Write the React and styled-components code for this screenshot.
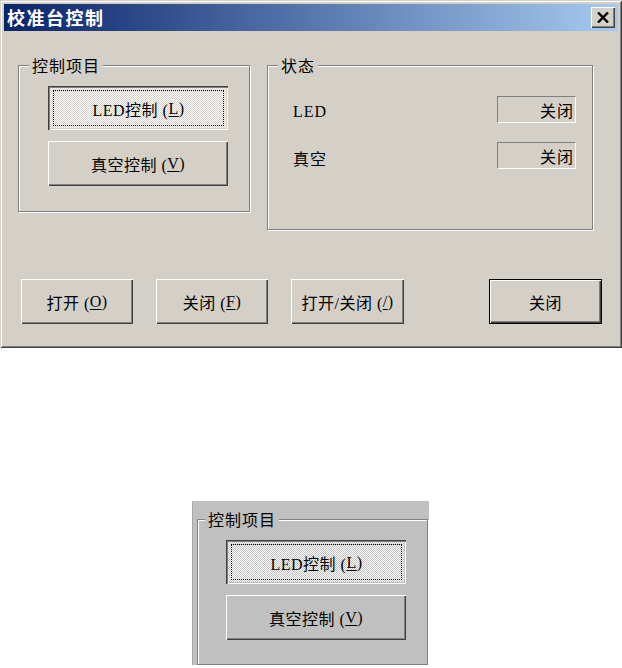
import React from "react";
import styled, { createGlobalStyle, css } from "styled-components";

const Global = createGlobalStyle`
  html, body { margin: 0; padding: 0; background: #fff; }
  body { font-family: "Liberation Serif", "Noto Sans CJK SC", serif; }
`;

const FONT = `"Liberation Serif", "Noto Sans CJK SC", sans-serif`;

const Window = styled.div`
  width: 622px;
  height: 348px;
  box-sizing: border-box;
  padding: 4px;
  background: #d4d0c8;
  box-shadow: inset 1px 1px 0 #d4d0c8, inset -1px -1px 0 #404040,
    inset 2px 2px 0 #fff, inset -2px -2px 0 #808080;
  display: flex;
  flex-direction: column;
  font-family: ${FONT};
  color: #000;
`;

const TitleBar = styled.div`
  height: 27px;
  display: flex;
  align-items: center;
  justify-content: space-between;
  padding: 0 3px 0 3px;
  background: linear-gradient(to right, #0a246a, #a6caf0);
`;

const Title = styled.span`
  color: #fff;
  font-family: "Noto Sans CJK SC", sans-serif;
  font-weight: bold;
  font-size: 18px;
  letter-spacing: 1.5px;
  line-height: 27px;
`;

const CloseBtn = styled.div`
  width: 24px;
  height: 21px;
  box-sizing: border-box;
  background: #d4d0c8;
  box-shadow: inset 1px 1px 0 #fff, inset -1px -1px 0 #404040,
    inset -2px -2px 0 #808080;
  display: flex;
  align-items: center;
  justify-content: center;
  padding-bottom: 1px;
`;

const Body = styled.div`
  flex: 1;
  display: flex;
  flex-direction: column;
  padding-top: 34px;
`;

const GroupRow = styled.div`
  display: flex;
  align-items: flex-start;
  gap: 17px;
  padding-left: 14px;
`;

const Group = styled.div`
  position: relative;
  box-sizing: border-box;
  width: ${(p) => p.$w}px;
  height: ${(p) => p.$h}px;
  border: 1px solid #808080;
  box-shadow: 1px 1px 0 #fff, inset 1px 1px 0 #fff;
  padding: ${(p) => p.$pad};
`;

const Caption = styled.span`
  position: absolute;
  top: -11px;
  left: ${(p) => p.$left ?? 10}px;
  padding: 0 3px;
  background: ${(p) => p.$bg || "#d4d0c8"};
  font-family: "Noto Sans CJK SC", sans-serif;
  font-size: 16px;
  letter-spacing: 1px;
  line-height: 20px;
`;

const ButtonStack = styled.div`
  display: flex;
  flex-direction: column;
  gap: 11px;
`;

const raised = css`
  background: ${(p) => p.$bg || "#d4d0c8"};
  box-shadow: inset 1px 1px 0 #fff, inset -1px -1px 0 #404040,
    inset -2px -2px 0 #808080;
`;

const pressed = css`
  background: repeating-conic-gradient(#ffffff 0% 25%, ${(p) => p.$bg || "#d4d0c8"} 0% 50%) 0 0 / 2px 2px;
  box-shadow: inset 1px 1px 0 #404040, inset 2px 2px 0 #808080,
    inset -1px -1px 0 #fff, inset -2px -2px 0 ${(p) => p.$bg || "#d4d0c8"};
`;

const defaultBtn = css`
  background: #d4d0c8;
  border: 1px solid #000;
  box-shadow: inset 1px 1px 0 #fff, inset -1px -1px 0 #404040,
    inset -2px -2px 0 #808080;
`;

const Button = styled.div`
  box-sizing: border-box;
  width: ${(p) => p.$w}px;
  height: ${(p) => p.$h}px;
  display: flex;
  align-items: center;
  justify-content: center;
  font-family: ${FONT};
  font-size: 16px;
  letter-spacing: 0.5px;
  white-space: nowrap;
  ${(p) => (p.$pressed ? pressed : p.$default ? defaultBtn : raised)}
`;

const FocusRing = styled.span`
  flex: 1;
  align-self: stretch;
  margin: 4px 4px 4px 5px;
  border: 1px dotted #000;
  display: flex;
  align-items: center;
  justify-content: center;
  padding-top: 1px;
`;

const Mn = styled.span`
  text-decoration: underline;
  text-underline-offset: 2px;
`;

const StatusGrid = styled.div`
  display: grid;
  grid-template-columns: 1fr 79px;
  row-gap: 18px;
  align-items: center;
`;

const StatusLabel = styled.span`
  font-family: ${FONT};
  font-size: 16px;
  letter-spacing: 1px;
  padding-top: 5px;
`;

const StatusField = styled.div`
  height: 27px;
  box-sizing: border-box;
  border-top: 1px solid #808080;
  border-left: 1px solid #808080;
  border-bottom: 1px solid #fff;
  border-right: 1px solid #fff;
  display: flex;
  align-items: center;
  justify-content: flex-end;
  padding-right: 1px;
  font-family: "Noto Sans CJK SC", sans-serif;
  font-size: 16px;
  letter-spacing: 1px;
`;

const ButtonRow = styled.div`
  display: flex;
  gap: 23px;
  margin-top: 49px;
  padding: 0 16px 0 17px;
`;

const Spacer = styled.div`
  flex: 1;
`;

const Snapshot = styled.div`
  margin: 153px 0 0 192px;
  width: 237px;
  height: 164px;
  box-sizing: border-box;
  background: #c0c0c0;
  padding: 18px 0 0 4px;
  overflow: hidden;
  border-left: 1px solid #a8a8a8;
  font-family: ${FONT};
`;

function XIcon() {
  return (
    <svg width="12" height="11" viewBox="0 0 12 11">
      <path d="M1 0.5 L11 10.5 M11 0.5 L1 10.5" stroke="#000" strokeWidth="2.4" />
    </svg>
  );
}

function ControlGroup({ bg, w, h, pad, capLeft }) {
  return (
    <Group $w={w} $h={h} $pad={pad}>
      <Caption $bg={bg} $left={capLeft}>控制项目</Caption>
      <ButtonStack>
        <Button $w={180} $h={44} $pressed $bg={bg}>
          <FocusRing>
            LED控制 (<Mn>L</Mn>)
          </FocusRing>
        </Button>
        <Button $w={180} $h={45} $bg={bg}>
          真空控制 (<Mn>V</Mn>)
        </Button>
      </ButtonStack>
    </Group>
  );
}

export default function App() {
  return (
    <>
      <Global />
      <Window>
        <TitleBar>
          <Title>校准台控制</Title>
          <CloseBtn>
            <XIcon />
          </CloseBtn>
        </TitleBar>
        <Body>
          <GroupRow>
            <ControlGroup w={232} h={147} pad="20px 0 0 29px" />
            <Group $w={326} $h={165} $pad="30px 16px 0 25px">
              <Caption>状态</Caption>
              <StatusGrid>
                <StatusLabel>LED</StatusLabel>
                <StatusField>关闭</StatusField>
                <StatusLabel>真空</StatusLabel>
                <StatusField>关闭</StatusField>
              </StatusGrid>
            </Group>
          </GroupRow>
          <ButtonRow>
            <Button $w={112} $h={45}>
              打开 (<Mn>O</Mn>)
            </Button>
            <Button $w={112} $h={45}>
              关闭 (<Mn>F</Mn>)
            </Button>
            <Button $w={113} $h={45}>
              打开/关闭 (<Mn>/</Mn>)
            </Button>
            <Spacer />
            <Button $w={113} $h={45} $default>
              关闭
            </Button>
          </ButtonRow>
        </Body>
      </Window>
      <Snapshot>
        <ControlGroup bg="#c0c0c0" w={231} h={146} pad="20px 0 0 28px" capLeft={7} />
      </Snapshot>
    </>
  );
}
